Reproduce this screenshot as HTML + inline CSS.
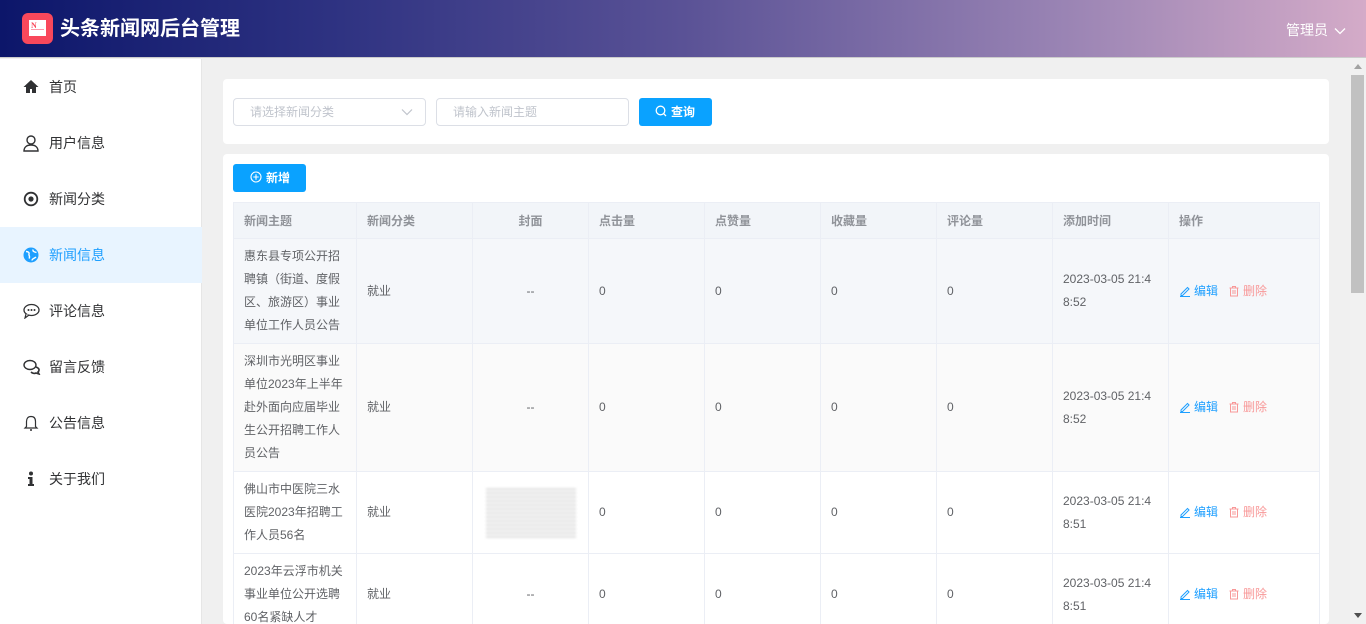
<!DOCTYPE html>
<html style="width:1366px;height:624px;overflow:hidden"><head><meta charset="utf-8"><style>
*{margin:0;padding:0;box-sizing:border-box}
body{width:1366px;height:624px;overflow:hidden;font-family:"Liberation Sans","Noto Sans CJK SC",sans-serif;background:#f0f0f0;position:relative;font-size:12px;color:#606266}
.hdr{position:absolute;left:0;top:0;width:1366px;height:58px;background:linear-gradient(90deg,#0c166a 0%,#2f3382 25%,#5a5296 50%,#9a84b4 78%,#d4abc8 100%);border-bottom:1px solid #ccc}
.logo{position:absolute;left:22px;top:13px;width:31px;height:31px;background:#f9485b;border-radius:6px}
.logo i{position:absolute;left:7px;top:7px;width:17px;height:16px;background:#fff}
.logo b{position:absolute;left:9px;top:8px;color:#f9485b;font-size:8px;font-weight:bold;font-family:"Liberation Serif",serif}
.logo u{position:absolute;left:9px;top:16px;width:13px;height:1px;background:#f9a;text-decoration:none}
.title{position:absolute;left:60px;top:16px;color:#fff;font-size:20px;font-weight:bold;line-height:26px}
.admin{position:absolute;left:1286px;top:20px;color:#fff;font-size:14px}
.side{position:absolute;left:0;top:59px;width:202px;height:565px;background:#fff;border-right:1px solid #e6e6e6}
.mi{position:absolute;left:0;width:202px;height:56px;line-height:56px;padding-left:49px;font-size:14px;color:#303133}
.mi.act{background:#e8f4ff;color:#1e9fff}
.mi svg{position:absolute;left:23px;top:20px}
.card{position:absolute;background:#fff;border-radius:4px}
.inp{position:absolute;height:28px;border:1px solid #dcdfe6;border-radius:4px;color:#c0c4cc;font-size:12px;line-height:26px;padding-left:16px;background:#fff}
.btn{position:absolute;height:28px;background:#0aa2ff;color:#fff;border-radius:3px;font-size:12px;line-height:28px;font-weight:bold}
table{position:absolute;left:233px;top:202px;border-collapse:collapse;table-layout:fixed;width:1086px}
td,th{border:1px solid #ebeef5;padding:0 10px;text-align:left;font-size:12px}
th{height:36px;background:#f2f5f9;color:#909399;font-weight:bold}
td{color:#606266;line-height:23px;word-break:break-all}
.c{text-align:center}
.ed{color:#1e9fff}.del{color:#f89898;margin-left:10px}
.ed svg,.del svg{vertical-align:-2px;margin-right:3px}
.sb{position:absolute;left:1350px;top:58px;width:16px;height:566px;background:#f1f1f1}
</style></head><body>
<div class="hdr">
<div class="logo"><i></i><b>N</b><u></u></div>
<div class="title">头条新闻网后台管理</div>
<div class="admin">管理员 <svg width="12" height="8" viewBox="0 0 12 8" style="margin-left:2px"><path d="M1 1.5L6 6.5L11 1.5" stroke="#fff" stroke-width="1.3" fill="none"/></svg></div>
</div>
<div class="side">
<div class="mi" style="top:0"><svg width="16" height="16" viewBox="0 0 16 16"><path d="M8 1L0.5 8H3v6h4v-4h2v4h4V8h2.5z" fill="#303133"/></svg>首页</div>
<div class="mi" style="top:56px"><svg width="16" height="17" viewBox="0 0 16 17"><circle cx="8" cy="5" r="4" stroke="#303133" stroke-width="1.4" fill="none"/><path d="M1 16c0-4 3-6 7-6s7 2 7 6z" stroke="#303133" stroke-width="1.4" fill="none"/></svg>用户信息</div>
<div class="mi" style="top:112px"><svg width="16" height="16" viewBox="0 0 16 16"><circle cx="8" cy="8" r="6.3" stroke="#303133" stroke-width="1.8" fill="none"/><circle cx="8" cy="8" r="2.6" fill="#303133"/></svg>新闻分类</div>
<div class="mi act" style="top:168px"><svg width="16" height="16" viewBox="0 0 16 16"><circle cx="8" cy="8" r="7.5" fill="#1e9fff"/><path d="M3 4.5c2 0 3.5 1 3 2.5s1.5 2.5 0 4.5M10 2.5c-.5 2 1.5 2.5 3.5 3M9 13.5c0-2 2.5-2 4-3.5" stroke="#fff" stroke-width="1.4" fill="none"/></svg>新闻信息</div>
<div class="mi" style="top:224px"><svg width="17" height="16" viewBox="0 0 17 16"><ellipse cx="8.5" cy="7" rx="7.5" ry="5.5" stroke="#303133" stroke-width="1.3" fill="none"/><path d="M3 11l-1 4 4-3" stroke="#303133" stroke-width="1.2" fill="#fff"/><circle cx="5.5" cy="7" r="1" fill="#303133"/><circle cx="8.5" cy="7" r="1" fill="#303133"/><circle cx="11.5" cy="7" r="1" fill="#303133"/></svg>评论信息</div>
<div class="mi" style="top:280px"><svg width="18" height="16" viewBox="0 0 18 16"><ellipse cx="7" cy="6" rx="6" ry="4.5" stroke="#303133" stroke-width="1.4" fill="none"/><path d="M13 8c3 1 4 3 2 5l1 2-3-1c-2 1-4 0-5-1" stroke="#303133" stroke-width="1.6" fill="none"/></svg>留言反馈</div>
<div class="mi" style="top:336px"><svg width="16" height="17" viewBox="0 0 16 17"><path d="M8 1.5c-3 0-4.5 2-4.5 5v5L2 13h12l-1.5-1.5v-5c0-3-1.5-5-4.5-5z" stroke="#303133" stroke-width="1.2" fill="none"/><circle cx="8" cy="15" r="1" fill="#303133"/></svg>公告信息</div>
<div class="mi" style="top:392px"><svg width="16" height="16" viewBox="0 0 16 16"><circle cx="8" cy="2.5" r="2" fill="#303133"/><path d="M5 6h4.5v7H11v2H5v-2h1.5V8H5z" fill="#303133"/></svg>关于我们</div>
</div>
<div class="card" style="left:223px;top:79px;width:1106px;height:65px"></div>
<div class="inp" style="left:233px;top:98px;width:193px">请选择新闻分类<svg style="position:absolute;right:12px;top:9px" width="12" height="8" viewBox="0 0 12 8"><path d="M1 1.5L6 6.5L11 1.5" stroke="#c0c4cc" stroke-width="1.2" fill="none"/></svg></div>
<div class="inp" style="left:436px;top:98px;width:193px">请输入新闻主题</div>
<div class="btn" style="left:639px;top:98px;width:73px;padding-left:16px"><svg width="12" height="12" viewBox="0 0 12 12" style="vertical-align:-1px;margin-right:4px"><circle cx="5.5" cy="5.5" r="4.3" stroke="#fff" stroke-width="1.3" fill="none"/><path d="M8.6 8.6L11 11" stroke="#fff" stroke-width="1.3"/></svg>查询</div>
<div class="card" style="left:223px;top:154px;width:1106px;height:470px"></div>
<div class="btn" style="left:233px;top:164px;width:73px;padding-left:17px"><svg width="12" height="12" viewBox="0 0 12 12" style="vertical-align:-1px;margin-right:4px"><circle cx="6" cy="6" r="5" stroke="#fff" stroke-width="1.1" fill="none"/><path d="M6 3.3v5.4M3.3 6h5.4" stroke="#fff" stroke-width="1.1"/></svg>新增</div>
<table>
<colgroup><col style="width:123px"><col style="width:116px"><col style="width:116px"><col style="width:116px"><col style="width:116px"><col style="width:116px"><col style="width:116px"><col style="width:116px"><col style="width:151px"></colgroup>
<tr><th>新闻主题</th><th>新闻分类</th><th class="c">封面</th><th>点击量</th><th>点赞量</th><th>收藏量</th><th>评论量</th><th>添加时间</th><th>操作</th></tr>
<tr style="height:105px;background:#f5f7fa"><td>惠东县专项公开招聘镇（街道、度假区、旅游区）事业单位工作人员公告</td><td>就业</td><td class="c">--</td><td>0</td><td>0</td><td>0</td><td>0</td><td>2023-03-05 21:48:52</td><td class="op"></td></tr>
<tr style="height:128px;background:#fafafa"><td>深圳市光明区事业单位2023年上半年赴外面向应届毕业生公开招聘工作人员公告</td><td>就业</td><td class="c">--</td><td>0</td><td>0</td><td>0</td><td>0</td><td>2023-03-05 21:48:52</td><td class="op"></td></tr>
<tr style="height:82px;background:#fff"><td>佛山市中医院三水医院2023年招聘工作人员56名</td><td>就业</td><td class="c"><div style="width:90px;height:50px;margin:0 auto;background:repeating-linear-gradient(180deg,#e4e4e4 0 2px,#f6f6f6 2px 4px);filter:blur(1px)"></div></td><td>0</td><td>0</td><td>0</td><td>0</td><td>2023-03-05 21:48:51</td><td class="op"></td></tr>
<tr style="height:82px;background:#fff"><td>2023年云浮市机关事业单位公开选聘60名紧缺人才</td><td>就业</td><td class="c">--</td><td>0</td><td>0</td><td>0</td><td>0</td><td>2023-03-05 21:48:51</td><td class="op"></td></tr>
</table>
<div class="sb"><div style="position:absolute;left:1px;top:17px;width:13px;height:218px;background:#c1c1c1"></div>
<svg style="position:absolute;left:4px;top:6px" width="8" height="5"><path d="M0 5L4 0L8 5z" fill="#a3a3a3"/></svg>
<svg style="position:absolute;left:4px;top:555px" width="8" height="5"><path d="M0 0L4 5L8 0z" fill="#505050"/></svg></div>
<script>
document.querySelectorAll('.op').forEach(function(t){t.innerHTML='<span class="ed"><svg width="12" height="12" viewBox="0 0 12 12"><path d="M2 9L8.5 2.5l1.5 1.5L3.5 10.5H2z M1 11.5h10" stroke="#1e9fff" stroke-width="1" fill="none"/></svg>编辑</span><span class="del"><svg width="12" height="12" viewBox="0 0 12 12"><path d="M1.5 3h9M4.5 3V1.5h3V3M2.5 3v8h7V3M5 5v4M7 5v4" stroke="#f89898" stroke-width="1" fill="none"/></svg>删除</span>';});
</script>
</body></html>
